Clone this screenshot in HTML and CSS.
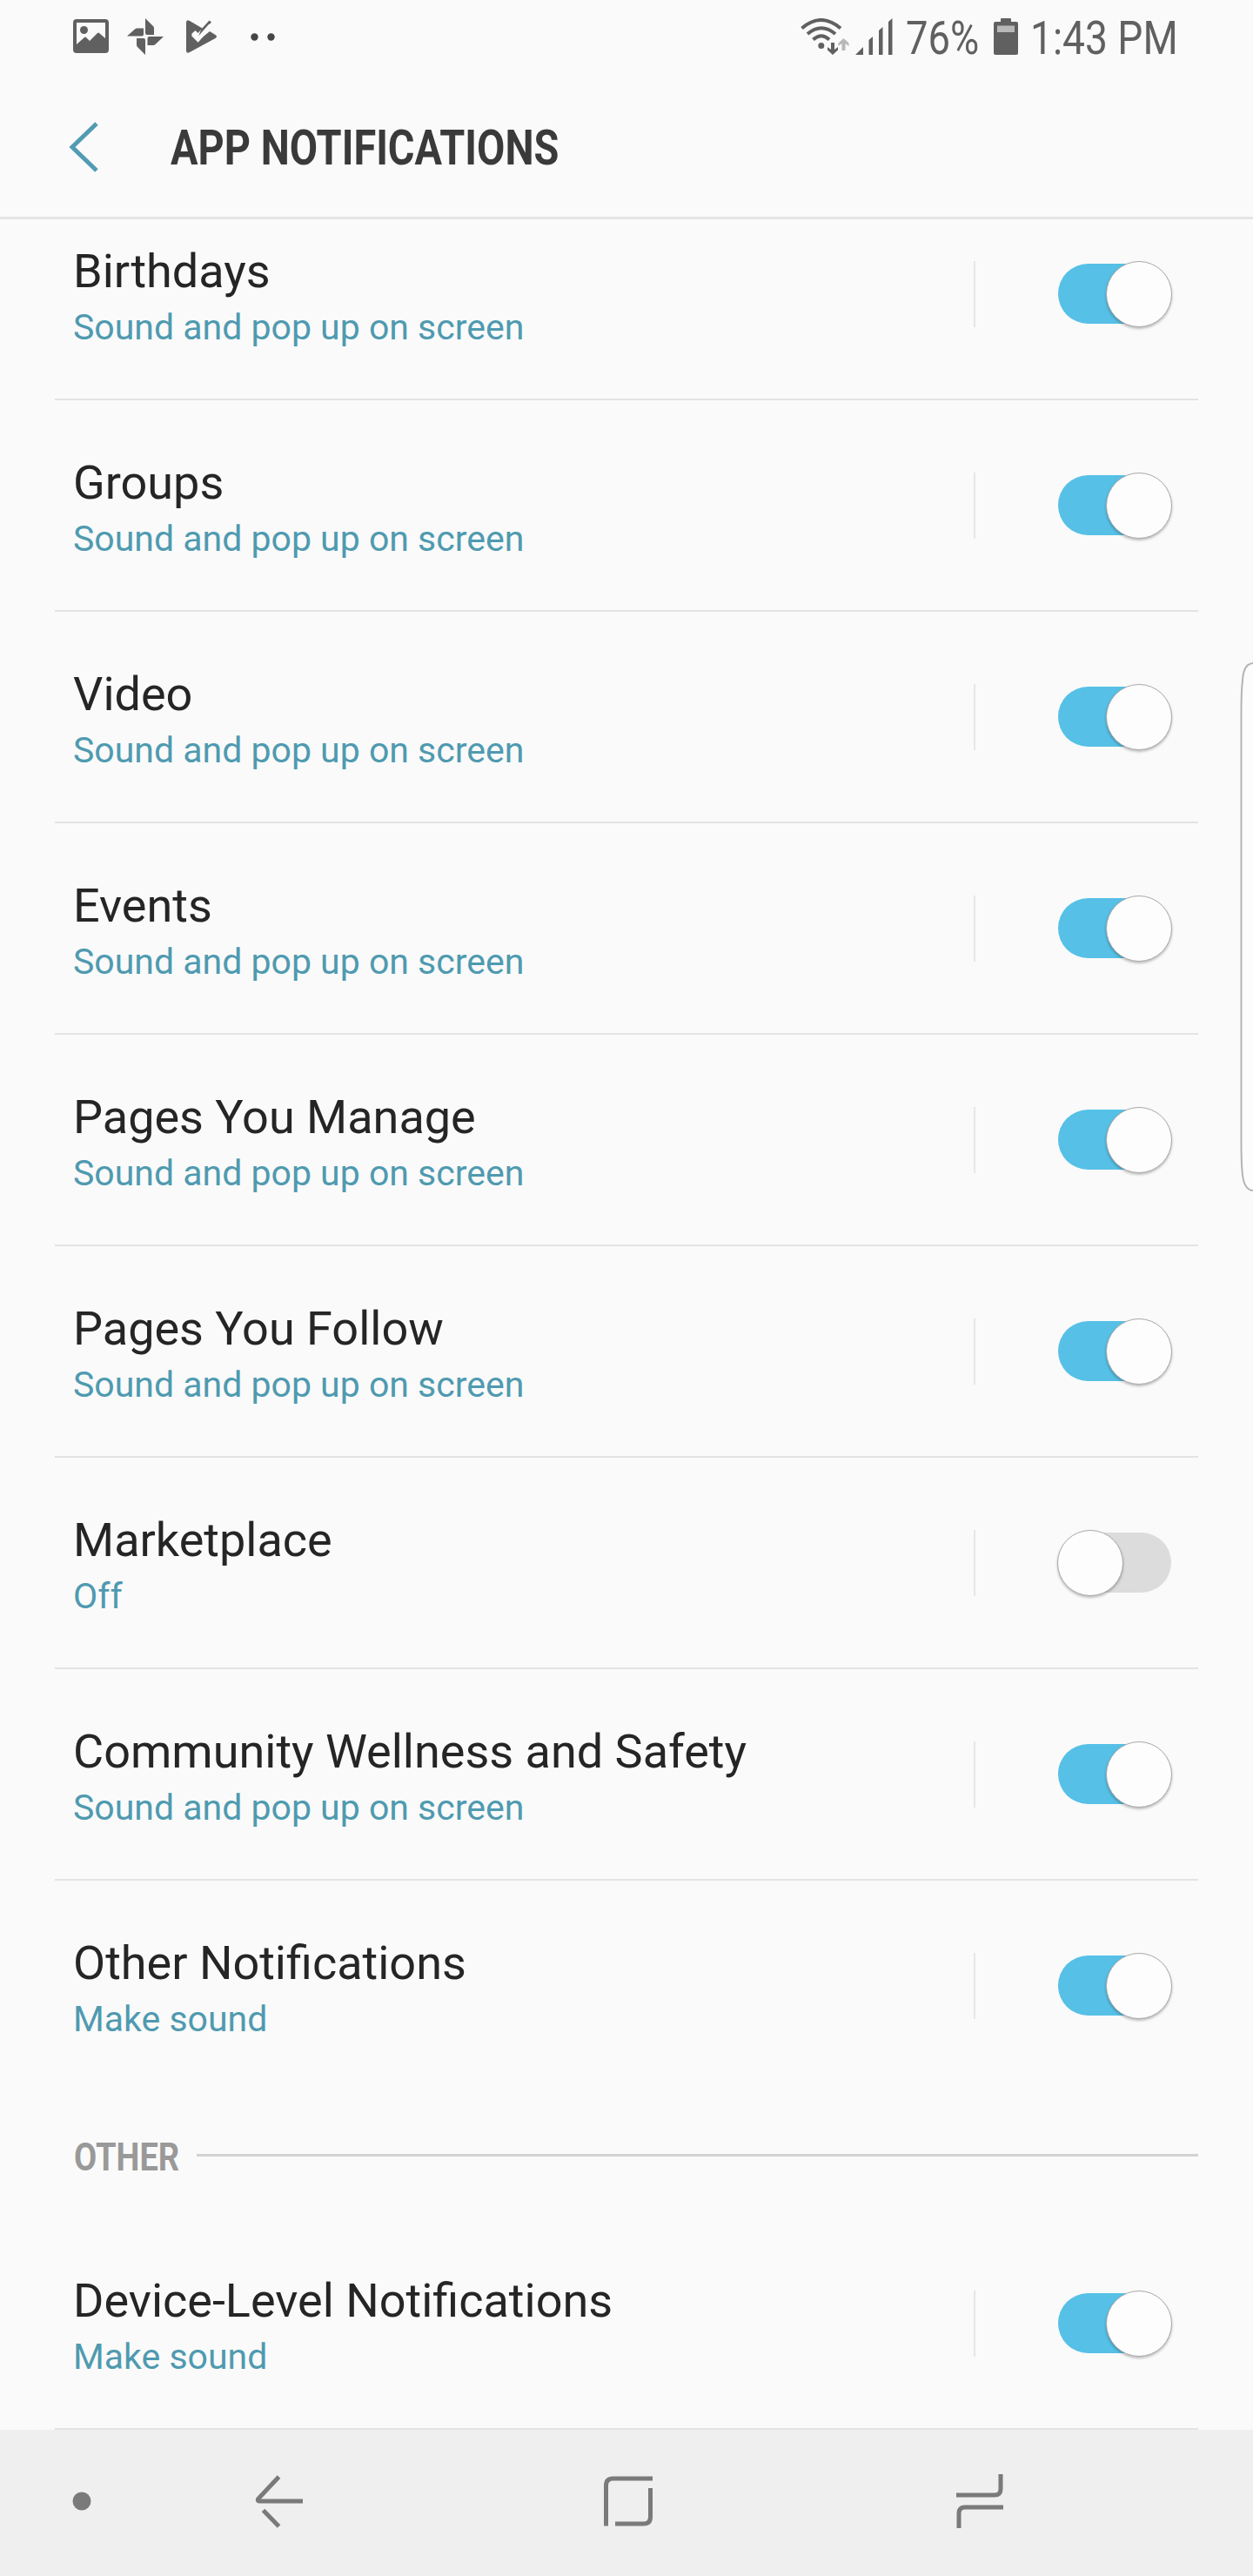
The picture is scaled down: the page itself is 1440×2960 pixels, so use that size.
FILE: index.html
```html
<!DOCTYPE html>
<html lang="en">
<head>
    <meta charset="UTF-8">
    <meta name="viewport" content="width=device-width, initial-scale=1.0">
    <title>App notifications</title>
    <link rel="stylesheet" href="styles.css">
</head>
<body>
    <div class="status-bar">
        <div class="status-left">
            <svg class="icon-image" width="41" height="40" viewBox="0 0 41 40">
                <path fill-rule="evenodd" d="M4 0h33a4 4 0 0 1 4 4v31a4 4 0 0 1-4 4H4a4 4 0 0 1-4-4V4a4 4 0 0 1 4-4zM4 4v25l9-8q1-1 2 0l4 4 9-9q1-1 2 0l7 6V4z"/>
                <circle cx="12.500" cy="12.500" r="4.500"/>
            </svg>
            <svg class="icon-photos" width="42" height="42" viewBox="0 0 42 42">
                <path d="M21 0l9 9q1 1 1 2.500V19H23q-2 0-2-2zM42 21l-9.500 9q-1 1-2.500 1h-6.500V23q0-2 2-2zM21 42l-9-9q-1-1-1-2.500V23h8q2 0 2 2zM0 20.500l9-8q1-1 2.500-1H19v7q0 2-2 2z"/>
            </svg>
            <svg class="icon-check" width="36" height="40" viewBox="0 0 36 40">
                <path d="M0 4Q0 0 4 2l14.500 8.500-5 5.500-3-3L6 17l7.500 8L27 14l6.500 4q3 2 0 4L4 38q-4 2-4-2z"/>
                <path d="M17 12L26.500 1.500l2.500 2L14 20z"/>
                <path d="M7.500 17.500l6 6L28 7" fill="none" stroke="#fafafa" stroke-width="4.500"/>
            </svg>
            <svg class="icon-more" width="28" height="9" viewBox="0 0 28 9">
                <circle cx="4.500" cy="4.500" r="4.200"/>
                <circle cx="23.500" cy="4.500" r="4.200"/>
            </svg>
        </div>
        <div class="status-right">
            <svg class="icon-wifi" width="56" height="42" viewBox="0 0 56 42">
                <g fill="none" stroke="#606060" stroke-width="4">
                    <path d="M1.500 11.500Q23.500-7.500 46 11.500"/>
                    <path d="M8 18Q24 4.500 40 18"/>
                    <path d="M14.500 24.500Q24 16 33 24.500"/>
                </g>
                <circle cx="23.800" cy="31.500" r="3.500"/>
                <path d="M35 28h4v8l4-3v3.500L37 42l-6-5.500V33l4 3z"/>
                <path class="faded" d="M47.500 37h4V29l4 3v-3.500L49.500 23l-6 5.500V32l4-3z"/>
            </svg>
            <svg class="icon-signal" width="43" height="42" viewBox="0 0 43 42">
                <path d="M0 42l9-9v9zM15.500 25l4.500-4v21h-4.500zM27 14l4.500-4v32H27zM38 4l4.500-4v42H38z"/>
            </svg>
            <span class="battery-text"><span>76%</span></span>
            <svg class="icon-battery" width="28" height="42" viewBox="0 0 28 42">
                <path d="M8 1q0-1 1-1h10q1 0 1 1v3h6q2 0 2 2v34q0 2-2 2H2q-2 0-2-2V6q0-2 2-2h6z"/>
                <path class="faded" d="M4 8.500h20v7.500H4z"/>
            </svg>
            <span class="clock"><span>1:43 PM</span></span>
        </div>
    </div>

    <div class="header">
        <svg class="icon-back" width="36" height="60" viewBox="0 0 36 60">
            <path d="M33 3L5 30l28 27" fill="none" stroke="#519cb3" stroke-width="5"/>
        </svg>
        <h1>APP NOTIFICATIONS</h1>
    </div>

    <div class="list">
        <div class="row first">
            <div class="label"><div class="name">Birthdays</div><div class="desc">Sound and pop up on screen</div></div>
            <div class="toggle on"><div class="thumb"></div></div>
        </div>
        <div class="row">
            <div class="label"><div class="name">Groups</div><div class="desc">Sound and pop up on screen</div></div>
            <div class="toggle on"><div class="thumb"></div></div>
        </div>
        <div class="row">
            <div class="label"><div class="name">Video</div><div class="desc">Sound and pop up on screen</div></div>
            <div class="toggle on"><div class="thumb"></div></div>
        </div>
        <div class="row">
            <div class="label"><div class="name">Events</div><div class="desc">Sound and pop up on screen</div></div>
            <div class="toggle on"><div class="thumb"></div></div>
        </div>
        <div class="row">
            <div class="label"><div class="name">Pages You Manage</div><div class="desc">Sound and pop up on screen</div></div>
            <div class="toggle on"><div class="thumb"></div></div>
        </div>
        <div class="row">
            <div class="label"><div class="name">Pages You Follow</div><div class="desc">Sound and pop up on screen</div></div>
            <div class="toggle on"><div class="thumb"></div></div>
        </div>
        <div class="row">
            <div class="label"><div class="name">Marketplace</div><div class="desc">Off</div></div>
            <div class="toggle"><div class="thumb"></div></div>
        </div>
        <div class="row">
            <div class="label"><div class="name">Community Wellness and Safety</div><div class="desc">Sound and pop up on screen</div></div>
            <div class="toggle on"><div class="thumb"></div></div>
        </div>
        <div class="row last">
            <div class="label"><div class="name">Other Notifications</div><div class="desc">Make sound</div></div>
            <div class="toggle on"><div class="thumb"></div></div>
        </div>

        <div class="section">
            <h2><span>OTHER</span></h2>
            <div class="line"></div>
        </div>

        <div class="row">
            <div class="label"><div class="name">Device-Level Notifications</div><div class="desc">Make sound</div></div>
            <div class="toggle on"><div class="thumb"></div></div>
        </div>
    </div>

    <div class="nav-bar">
        <svg class="nav-dot" width="22" height="22" viewBox="0 0 22 22">
            <circle cx="11" cy="11" r="10.500"/>
        </svg>
        <svg class="nav-back" width="56" height="62" viewBox="0 0 56 62">
            <path d="M27.500 3L4 28q-2 3 2 3h49M9.500 41.500L27.500 60"/>
        </svg>
        <svg class="nav-home" width="58" height="60" viewBox="0 0 58 60">
            <path d="M3.500 58.500V12q0-8 8-8H57M54.500 15v33q0 8-8 8H14"/>
        </svg>
        <svg class="nav-recent" width="54" height="62" viewBox="0 0 54 62">
            <path d="M0 24h44q7 0 7-7V0M54 38H10q-7 0-7 7v17"/>
        </svg>
    </div>

    <!-- edge panel handle -->
    <svg class="edge-handle" width="16" height="610" viewBox="0 0 16 610">
        <path d="M17 2Q5 2 4 22Q2.500 34 2.500 60V550Q2.500 578 4 590Q6 608 17 608"/>
    </svg>
</body>
</html>
```
FILE: styles.css
```css
* {
    box-sizing: border-box;
    margin: 0;
    padding: 0;
}
body {
    position: relative;
    width: 1440px;
    height: 2960px;
    overflow: hidden;
    background: #fafafa;
    font-family: Roboto, sans-serif;
    display: flex;
    flex-direction: column;
}
svg {
    display: block;
    flex: none;
}

/* status bar */
.status-bar {
    height: 86px;
    padding: 0 84px;
    display: flex;
    justify-content: space-between;
    fill: #606060;
    color: #606060;
}
.status-left, .status-right {
    display: flex;
    align-items: center;
    height: 84px;
}
.icon-photos { margin-left: 21px; }
.icon-check { margin-left: 26px; }
.icon-more { margin-left: 38px; fill: #454545; }
.icon-signal { margin-left: 7px; }
.faded { fill: #b8b8b8; }
.battery-text, .clock {
    font-size: 53px;
    line-height: 62px;
    white-space: nowrap;
    margin-top: 3px;
}
.battery-text span, .clock span {
    display: inline-block;
    transform: scaleX(0.87);
    transform-origin: left;
}
.battery-text span { transform: scaleX(0.855); }
.battery-text { width: 101px; margin-left: 15px; }
.clock { width: 172px; margin-left: 14px; }

/* header */
.header {
    height: 166px;
    padding: 2px 0 0 78px;
    border-bottom: 3px solid #e5e5e5;
    display: flex;
    align-items: center;
}
.header h1 {
    margin-left: 82px;
    padding-top: 3px;
    font-size: 55px;
    line-height: 64px;
    font-weight: 700;
    color: #3a3a3a;
    white-space: nowrap;
    transform: scaleX(0.853);
    transform-origin: left;
}

/* list */
.list {
    overflow: hidden;
    padding: 0 63px;
}
.row {
    height: 243px;
    padding: 0 30px 0 21px;
    border-bottom: 2px solid #e3e3e3;
    display: flex;
    align-items: center;
    justify-content: space-between;
}
.row.first { margin-top: -35px; }
.row.last { border-bottom-color: transparent; }
.label { padding-top: 5px; }
.name {
    font-size: 54px;
    line-height: 64px;
    color: #252525;
}
.desc {
    font-size: 41px;
    line-height: 50px;
    margin-top: 7px;
    color: #4f9ab0;
}
.toggle {
    position: relative;
    width: 228px;
    height: 76px;
    padding-left: 95px;
    border-left: 2px solid #e6e6e6;
    display: flex;
    align-items: center;
}
.toggle::before {
    content: "";
    width: 130px;
    height: 69px;
    border-radius: 35px;
    background: #dcdcdc;
}
.toggle.on::before { background: #56c0e6; }
.thumb {
    position: absolute;
    left: 94px;
    top: 0;
    width: 76px;
    height: 76px;
    border: 1.5px solid #aaa;
    border-radius: 50%;
    background: #fdfdfd;
    box-shadow: 0 2px 3px rgba(0, 0, 0, 0.25);
}
.toggle.on .thumb { left: 150px; }

/* section heading */
.section {
    height: 145px;
    padding-left: 22px;
    display: flex;
    align-items: center;
}
.section h2 {
    width: 141px;
    margin-top: 4px;
    font-size: 45px;
    line-height: 52px;
    font-weight: 700;
    color: #999;
}
.section h2 span {
    display: inline-block;
    transform: scaleX(0.845);
    transform-origin: left;
}
.line {
    flex: 1;
    height: 3px;
    background: #d2d2d2;
}

/* navigation bar */
.nav-bar {
    height: 168px;
    padding: 0 0 5px 83px;
    background: #efefef;
    display: flex;
    align-items: center;
}
.nav-bar path {
    fill: none;
    stroke: #7a7a7a;
    stroke-width: 5;
}
.nav-dot { fill: #7a7a7a; }
.nav-back { margin-left: 188px; }
.nav-home { margin-left: 344px; }
.nav-recent { margin-left: 348px; }

.edge-handle {
    position: absolute;
    right: 0;
    top: 760px;
    fill: #fcfcfc;
    stroke: #b4b4b4;
    stroke-width: 2;
}
```
